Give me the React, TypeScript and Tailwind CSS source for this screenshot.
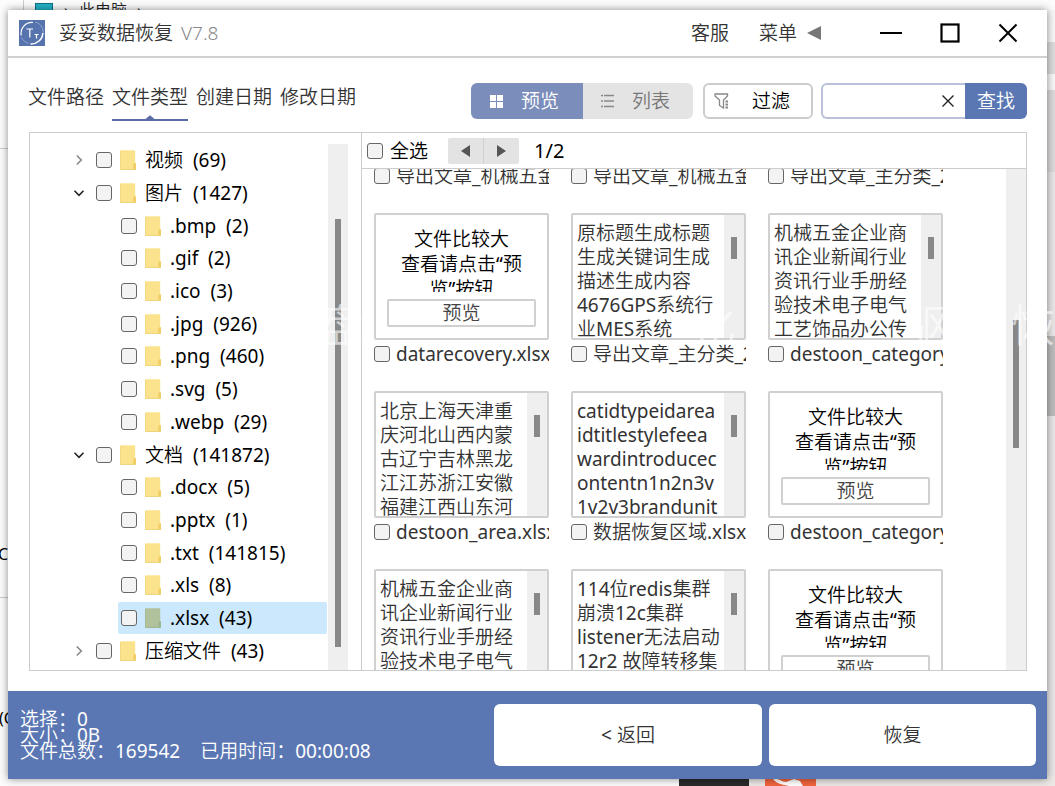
import type { FC, ReactNode } from 'react'
import clsx from 'clsx'
import { useState } from 'react'

interface TreeNode {
  name: string
  count: number
  open?: boolean
  children?: TreeNode[]
}

interface PreviewFile {
  name: string
  lines?: string[]
}

const tree: TreeNode[] = [
  { name: '视频', count: 69 },
  {
    name: '图片',
    count: 1427,
    open: true,
    children: [
      { name: '.bmp', count: 2 },
      { name: '.gif', count: 2 },
      { name: '.ico', count: 3 },
      { name: '.jpg', count: 926 },
      { name: '.png', count: 460 },
      { name: '.svg', count: 5 },
      { name: '.webp', count: 29 },
    ],
  },
  {
    name: '文档',
    count: 141872,
    open: true,
    children: [
      { name: '.docx', count: 5 },
      { name: '.pptx', count: 1 },
      { name: '.txt', count: 141815 },
      { name: '.xls', count: 8 },
      { name: '.xlsx', count: 43 },
    ],
  },
  { name: '压缩文件', count: 43 },
]

const scrolledNames = ['导出文章_机械五金', '导出文章_机械五金', '导出文章_主分类_2']

const machinery = ['机械五金企业商', '讯企业新闻行业', '资讯行业手册经', '验技术电子电气', '工艺饰品办公传']

const files: PreviewFile[] = [
  { name: 'datarecovery.xlsx' },
  { name: '导出文章_主分类_2', lines: ['原标题生成标题', '生成关键词生成', '描述生成内容', '4676GPS系统行', '业MES系统'] },
  { name: 'destoon_category', lines: machinery },
  { name: 'destoon_area.xlsx', lines: ['北京上海天津重', '庆河北山西内蒙', '古辽宁吉林黑龙', '江江苏浙江安徽', '福建江西山东河'] },
  { name: '数据恢复区域.xlsx', lines: ['catidtypeidarea', 'idtitlestylefeea', 'wardintroducec', 'ontentn1n2n3v', '1v2v3brandunit'] },
  { name: 'destoon_category' },
  { name: '', lines: machinery },
  { name: '', lines: ['114位redis集群', '崩溃12c集群', 'listener无法启动', '12r2 故障转移集'] },
  { name: '' },
]

const tabs = ['文件路径', '文件类型', '创建日期', '修改日期']

const Check: FC<{ label: string }> = ({ label }) => (
  <input
    type="checkbox"
    aria-label={label}
    className="size-4 shrink-0 appearance-none rounded-[3px] border border-[#666] bg-[#f3f3f3] checked:bg-[#5a77b3]"
  />
)

const Folder: FC<{ active?: boolean }> = ({ active }) => (
  <svg viewBox="0 0 16 20" className="h-5 w-4 shrink-0">
    <path d="M0 1.2Q0 .2 1 .2h13.3q.9 0 .9 1V13l.8.8V20H1q-1 0-1-1Z" fill={active ? '#b0c19b' : '#fbe38e'} />
    <path d="M13.2 20v-5.4l1.6-1.8 1.2 1V20Z" fill={active ? '#9db78f' : '#f0cf69'} />
    <path d="M0 19.5h16M.3 1v18" stroke={active ? '#9db78f' : '#efd27a'} strokeWidth=".8" />
  </svg>
)

const Chevron: FC<{ open?: boolean }> = ({ open }) => (
  <svg viewBox="0 0 12 12" className="size-3" fill="none" strokeWidth="1.6">
    {open
      ? <path d="M1.5 3.8 6 8.3l4.5-4.5" stroke="#222" />
      : <path d="M3.8 1.5 8.3 6l-4.5 4.5" stroke="#888" />}
  </svg>
)

const TreeRow: FC<{ node: TreeNode, child?: boolean, active?: boolean, onSelect: () => void }> = (props) => {
  const { node, child, active } = props
  return (
    <li className="flex min-h-0 flex-1 items-center">
      {!child && (
        <button className="ml-[43px] mr-[11px] size-3" aria-label={node.name}>
          <Chevron open={node.open} />
        </button>
      )}
      <div className={clsx('flex h-full flex-1 items-center', child && 'ml-[88px] pl-[3px]', active && 'rounded-xs bg-[#cce8fc]')}>
        <Check label={node.name} />
        <button onClick={props.onSelect} className="ml-2 flex items-center gap-[9px] whitespace-pre text-black">
          <Folder active={active} />
          <span>{`${node.name}  (${node.count})`}</span>
        </button>
      </div>
    </li>
  )
}

const FileTree: FC = () => {
  const [selected, setSelected] = useState('.xlsx')
  const rows = tree.flatMap(node => [
    { node, child: false },
    ...(node.children ?? []).map(c => ({ node: c, child: true })),
  ])
  return (
    <div className="flex w-[332px] shrink-0 border-r border-[#ccc] pt-[11px]">
      <ul className="mb-[3px] flex flex-1 flex-col">
        {rows.map(({ node, child }) => (
          <TreeRow
            key={node.name}
            node={node}
            child={child}
            active={node.name === selected}
            onSelect={() => setSelected(node.name)}
          />
        ))}
      </ul>
      <div className="mr-[13px] ml-px flex w-5 justify-center bg-[#efefef] pt-[75px] pb-[23px]">
        <div className="w-[6px] bg-[#888]" />
      </div>
    </div>
  )
}

const FileLabel: FC<{ name: string }> = ({ name }) => (
  <label className="flex h-7 items-center gap-[6px] overflow-hidden text-[#333]">
    <Check label={name} />
    <span className="whitespace-nowrap">{name}</span>
  </label>
)

const FileCard: FC<{ file: PreviewFile }> = ({ file }) => (
  <div className="min-w-0">
    <div className="h-[127px] overflow-hidden rounded-xs border-2 border-[#d0d0d0]">
      {file.lines
        ? (
            <div className="flex h-full">
              <div className="flex-1 overflow-hidden pt-[6px] pl-1 leading-6 whitespace-pre text-[#333]">
                {file.lines.map(line => <div key={line}>{line}</div>)}
              </div>
              <div className="flex w-5 shrink-0 justify-center bg-[#efefef] pt-[22px]">
                <div className="h-[22px] w-[6px] bg-[#888]" />
              </div>
            </div>
          )
        : (
            <div className="flex h-full flex-col px-[11px] pt-3 text-center text-black">
              <div className="h-[65px] overflow-hidden leading-[25px] whitespace-pre">
                {'文件比较大\n查看请点击“预\n览”按钮'}
              </div>
              <button className="mt-[7px] h-7 rounded-xs border-2 border-[#d0d0d0] leading-6 text-[#444]">预览</button>
            </div>
          )}
    </div>
    {file.name && <FileLabel name={file.name} />}
  </div>
)

const Pager: FC = () => (
  <div className="ml-5 flex h-[26px] w-[71px] rounded-xs bg-[#e3e3e3]">
    <button className="flex flex-1 items-center justify-center border-r border-[#d0d0d0]" aria-label="上一页">
      <svg viewBox="0 0 10 12" className="h-3 w-[10px]"><path d="M9 0v12L0 6Z" fill="#555" /></svg>
    </button>
    <button className="flex flex-1 items-center justify-center" aria-label="下一页">
      <svg viewBox="0 0 10 12" className="h-3 w-[10px]"><path d="M0 0v12l9-6Z" fill="#555" /></svg>
    </button>
  </div>
)

const PreviewPane: FC = () => (
  <div className="flex min-w-0 flex-1 flex-col">
    <div className="flex h-9 shrink-0 items-center border-b border-[#ccc] pl-[5px] text-black">
      <label className="flex items-center gap-[7px]">
        <Check label="全选" />
        全选
      </label>
      <Pager />
      <span className="ml-[15px] text-xl">1/2</span>
    </div>
    <div className="flex min-h-0 flex-1">
      <div className="flex-1 overflow-hidden pl-3">
        <div className="-mt-[7px] grid grid-cols-[repeat(3,175px)] gap-x-[22px] gap-y-[23px]">
          {scrolledNames.map((name, i) => <FileLabel key={i} name={name} />)}
          {files.map((file, i) => <FileCard key={i} file={file} />)}
        </div>
      </div>
      <div className="flex w-5 justify-center bg-[#efefef] pt-[151px]">
        <div className="h-32 w-[6px] bg-[#888]" />
      </div>
    </div>
  </div>
)

const Logo: FC = () => (
  <svg viewBox="0 0 26 26" className="size-[26px]">
    <rect width="26" height="26" fill="#5673ae" />
    <path d="M2.200 15.500C1 8 7 1.800 14 2.500" fill="none" stroke="#fff" strokeWidth="1.200" />
    <path d="M16.500 2.200c5 1 7.700 5.500 7.700 10.500" fill="none" stroke="#b9c6e2" strokeWidth=".6" />
    <path d="M23.800 13c0 6.500-6 11.300-12.300 11" fill="none" stroke="#fff" strokeWidth="1.500" />
    <path d="M2.500 17.500c1.500 3 4 5 7 6" fill="none" stroke="#b9c6e2" strokeWidth=".6" />
    <path d="M7.500 9h6.500M10.800 9v8.500M15.500 14.500h4M17.500 14.500v4" fill="none" stroke="#fff" strokeWidth="1.200" />
  </svg>
)

const TitleBar: FC = () => (
  <header className="flex h-12 shrink-0 items-center border-b-2 border-[#d0d0d0] pr-[29px] pl-[11px] text-[#333]">
    <Logo />
    <h1 className="ml-[14px]">妥妥数据恢复</h1>
    <span className="ml-2 font-light text-[#888]">V7.8</span>
    <button className="ml-auto">客服</button>
    <button className="ml-[30px] flex items-center gap-[10px]">
      菜单
      <svg viewBox="0 0 14 14" className="size-[14px]"><path d="M14 0v14L0 7Z" fill="#777" /></svg>
    </button>
    <button className="ml-[59px]" aria-label="最小化">
      <svg viewBox="0 0 22 20" className="h-5 w-[22px]"><path d="M0 10h22" stroke="#000" strokeWidth="2" /></svg>
    </button>
    <button className="ml-[38px]" aria-label="最大化">
      <svg viewBox="0 0 20 20" className="size-5"><rect x="1.500" y="1.500" width="17" height="17" fill="none" stroke="#000" strokeWidth="2.200" /></svg>
    </button>
    <button className="ml-[38px]" aria-label="关闭">
      <svg viewBox="0 0 20 20" className="size-5"><path d="m1.500 1.500 17 17m0-17-17 17" stroke="#000" strokeWidth="2" /></svg>
    </button>
  </header>
)

const Toolbar: FC = () => {
  const [tab, setTab] = useState('文件类型')
  return (
    <div className="flex shrink-0 items-center pt-[25px] pb-[11px]">
      <nav className="flex gap-2 text-[#333]">
        {tabs.map(name => (
          <button key={name} onClick={() => setTab(name)} className="flex h-[38px] flex-col items-center">
            <span className="h-8 leading-7">{name}</span>
            {name === tab && (
              <svg viewBox="0 0 76 6" className="h-[6px] w-full">
                <path d="M0 4h33.500L38 .2 42.500 4H76v2H0Z" fill="#5a6ba5" />
              </svg>
            )}
          </button>
        ))}
      </nav>
      <div className="mb-[2px] ml-auto flex">
        <div className="flex h-9 overflow-hidden rounded-md">
          <button className="flex w-28 items-center gap-[18px] bg-[#7b8dbb] pl-[19px] text-white">
            <svg viewBox="0 0 13 13" className="size-[13px]" fill="#fff">
              <path d="M0 0h6v6H0zM7 0h6v6H7zM0 7h6v6H0zM7 7h6v6H7z" />
            </svg>
            预览
          </button>
          <button className="flex w-[110px] items-center gap-[18px] bg-[#e4e4e4] pl-[18px] text-[#777]">
            <svg viewBox="0 0 13 14" className="h-[14px] w-[13px]" stroke="#888" strokeWidth="1.500">
              <path d="M0 1.500h2M3 1.500h10M0 7h2M3 7h10M0 12.500h2M3 12.500h10" />
            </svg>
            列表
          </button>
        </div>
        <button className="ml-[10px] flex h-9 w-[110px] items-center gap-[22px] rounded-md border-2 border-[#ccc] pl-[9px] text-black">
          <svg viewBox="0 0 16 16" className="size-4" fill="none" stroke="#888" strokeWidth="1.300">
            <path d="M1 1h12.500v2L9.500 7v8L5.500 12.500V7L1 3Z" />
            <path d="M11.500 8.500H14M11.500 11.500H14M11.500 14.500H14" strokeWidth="1.800" />
          </svg>
          过滤
        </button>
        <div className="ml-2 flex h-9">
          <div className="flex w-36 items-center rounded-l-md border-2 border-r-0 border-[#b9c2d8]">
            <input type="text" aria-label="查找内容" className="w-0 flex-1 px-2 outline-none" />
            <button className="mr-[11px]" aria-label="清空">
              <svg viewBox="0 0 12 12" className="size-3"><path d="m.5.5 11 11m0-11-11 11" stroke="#222" strokeWidth="1.400" /></svg>
            </button>
          </div>
          <button className="w-[62px] rounded-r-md bg-[#5a77b3] text-white">查找</button>
        </div>
      </div>
    </div>
  )
}

const Footer: FC = () => (
  <footer className="flex h-22 shrink-0 items-center gap-[7px] bg-[#5a77b3] pr-[11px] pl-3 text-white">
    <div className="flex-1 leading-4 whitespace-pre">
      <p>选择：0</p>
      <p>大小：0B</p>
      <p className="flex gap-5">
        <span>文件总数：169542</span>
        <span>已用时间：00:00:08</span>
      </p>
    </div>
    <button className="h-[62px] w-[268px] rounded-md bg-white text-[#333]">&lt; 返回</button>
    <button className="h-[62px] w-[267px] rounded-md bg-white text-[#333]">恢复</button>
  </footer>
)

const BackWindows: FC<{ children: ReactNode }> = ({ children }) => (
  <div className="relative flex h-screen min-h-[600px] overflow-hidden bg-[#fcfcfc] pt-[10px] pr-2 pb-[7px] pl-2 font-['Noto_Sans','Noto_Sans_CJK_SC_DemiLight','Noto_Sans_CJK_SC',sans-serif] text-[19px] leading-7">
    <div className="absolute top-0 left-[23px] h-3 w-px bg-[#ccc]" />
    <div className="absolute top-[3px] left-[35px] h-3 w-[18px] border border-[#0b6f86] bg-[#22b3c6]" />
    <span className="absolute -top-[2px] left-16 flex gap-[10px] text-base whitespace-pre text-[#222]">
      <span>›</span>
      <span>此电脑</span>
      <span>›</span>
    </span>
    <div className="absolute top-[148px] left-0 h-px w-2 bg-[#ccc]" />
    <div className="absolute top-[597px] left-0 h-px w-2 bg-[#ccc]" />
    <span className="absolute top-[542px] -left-[2px] text-base text-black">C</span>
    <span className="absolute top-[706px] -left-px text-base text-black">(C</span>
    <div className="absolute top-[10px] right-0 flex h-full w-2 flex-col">
      <div className="h-8 bg-[#f7f7f7]" />
      <div className="h-8 bg-[#dcdcdc]" />
      <div className="h-4 bg-[#f7f7f7]" />
      <div className="h-[82px] bg-[#dcdada]" />
      <div className="h-[164px] bg-[#e8e6e6]" />
      <div className="h-20 bg-[#bcbcbc]" />
      <div className="flex-1 bg-[#e8e6e6]" />
    </div>
    <div className="absolute right-0 bottom-0 flex h-[10px] w-[376px] gap-4 bg-[#ebe8e5]">
      <div className="w-[70px] bg-[#2a2a2a]" />
      <svg viewBox="0 0 51 10" className="h-[10px] w-[51px]">
        <path d="M0 0h51v10H0Z" fill="#f0643c" />
        <path d="M8 3c6-1 8 3 13 3l8-3 6 2 3 5H24l-5-1C14 8 10 6 8 3Z" fill="#fff" />
      </svg>
    </div>
    {children}
  </div>
)

const Watermark: FC = () => (
  <div aria-hidden className="pointer-events-none absolute inset-x-0 top-[296px] flex justify-end gap-[62px] text-[44px] leading-[58px] text-white/60">
    <span className="mr-[266px]">盘</span>
    <span className="mr-[108px]">化</span>
    <span>驱</span>
    <span>恢</span>
  </div>
)

export default function App() {
  return (
    <BackWindows>
      <div className="relative flex min-w-0 flex-1 flex-col bg-white shadow-[0_0_8px_rgba(0,0,0,0.45)]">
        <TitleBar />
        <main className="flex min-h-0 flex-1 flex-col px-5 pb-5">
          <Toolbar />
          <div className="ml-px flex min-h-0 flex-1 border border-[#ccc]">
            <FileTree />
            <PreviewPane />
          </div>
        </main>
        <Footer />
      </div>
      <Watermark />
    </BackWindows>
  )
}
